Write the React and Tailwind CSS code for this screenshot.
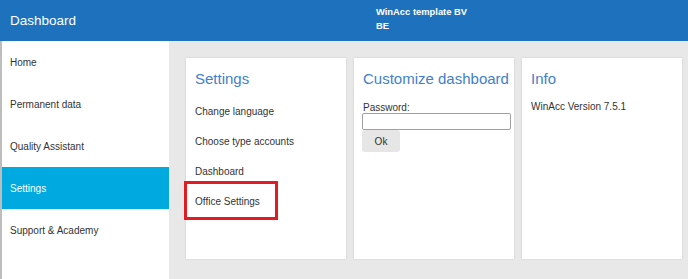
export default function App() {
  const side = ["Home", "Permanent data", "Quality Assistant", "Settings", "Support & Academy"];
  const settings = ["Change language", "Choose type accounts", "Dashboard", "Office Settings"];
  return (
    <div className="w-[688px] h-[279px] overflow-hidden flex flex-col font-['Liberation_Sans',Arial,sans-serif] text-[#333]">
      <header className="h-[41px] shrink-0 bg-[#1e72bd] flex text-white">
        <div className="w-[169px] pl-[10px] self-center text-[13.5px] leading-none">Dashboard</div>
        <div className="ml-[207px] mt-[5px] text-[9.4px] font-bold leading-[14px]">
          <div>WinAcc template BV</div>
          <div>BE</div>
        </div>
      </header>
      <div className="flex flex-1">
        <aside className="w-[169px] shrink-0 bg-white border-l-2 border-[#bdbdbd]">
          {side.map((s) => (
            <div
              key={s}
              className={
                "h-[42px] flex items-center pl-2 text-[10px] " +
                (s === "Settings" ? "bg-[#00a9e0] text-white" : "")
              }
            >
              {s}
            </div>
          ))}
        </aside>
        <main className="flex-1 bg-[#e8e8e8] pt-[17px] pl-[17px] flex items-start gap-2">
          <div className="w-[160px] h-[201px] bg-white pt-3 px-[9px] shadow-[0_0_2px_rgba(0,0,0,0.12)]">
            <div className="text-[15px] leading-[18px] text-[#3f7fcc]">Settings</div>
            <div className="mt-[8px]">
              {settings.map((s) => (
                <div key={s} className="relative h-[30px] flex items-center text-[10px]">
                  {s}
                  {s === "Office Settings" && (
                    <div className="absolute left-[-11px] top-[-5px] w-[94px] h-[39px] border-[3px] border-[#e31b23]"></div>
                  )}
                </div>
              ))}
            </div>
          </div>
          <div className="w-[160px] h-[201px] bg-white pt-3 px-[9px] shadow-[0_0_2px_rgba(0,0,0,0.12)]">
            <div className="text-[15px] leading-[18px] text-[#3f7fcc] whitespace-nowrap">Customize dashboard</div>
            <div className="mt-[14px] text-[10px] leading-[11px]">Password:</div>
            <div className="ml-[-1px] w-[149px] h-[17px] border border-[#a0a0a0] rounded-[2px] bg-white"></div>
            <div className="ml-[-1px] w-[38px] h-[22px] bg-[#e6e6e6] rounded-[3px] flex items-center justify-center text-[10px]">Ok</div>
          </div>
          <div className="w-[160px] h-[201px] bg-white pt-3 px-[9px] shadow-[0_0_2px_rgba(0,0,0,0.12)]">
            <div className="text-[15px] leading-[18px] text-[#3f7fcc]">Info</div>
            <div className="mt-[13px] text-[10px] leading-[12px]">WinAcc Version 7.5.1</div>
          </div>
        </main>
      </div>
    </div>
  );
}
